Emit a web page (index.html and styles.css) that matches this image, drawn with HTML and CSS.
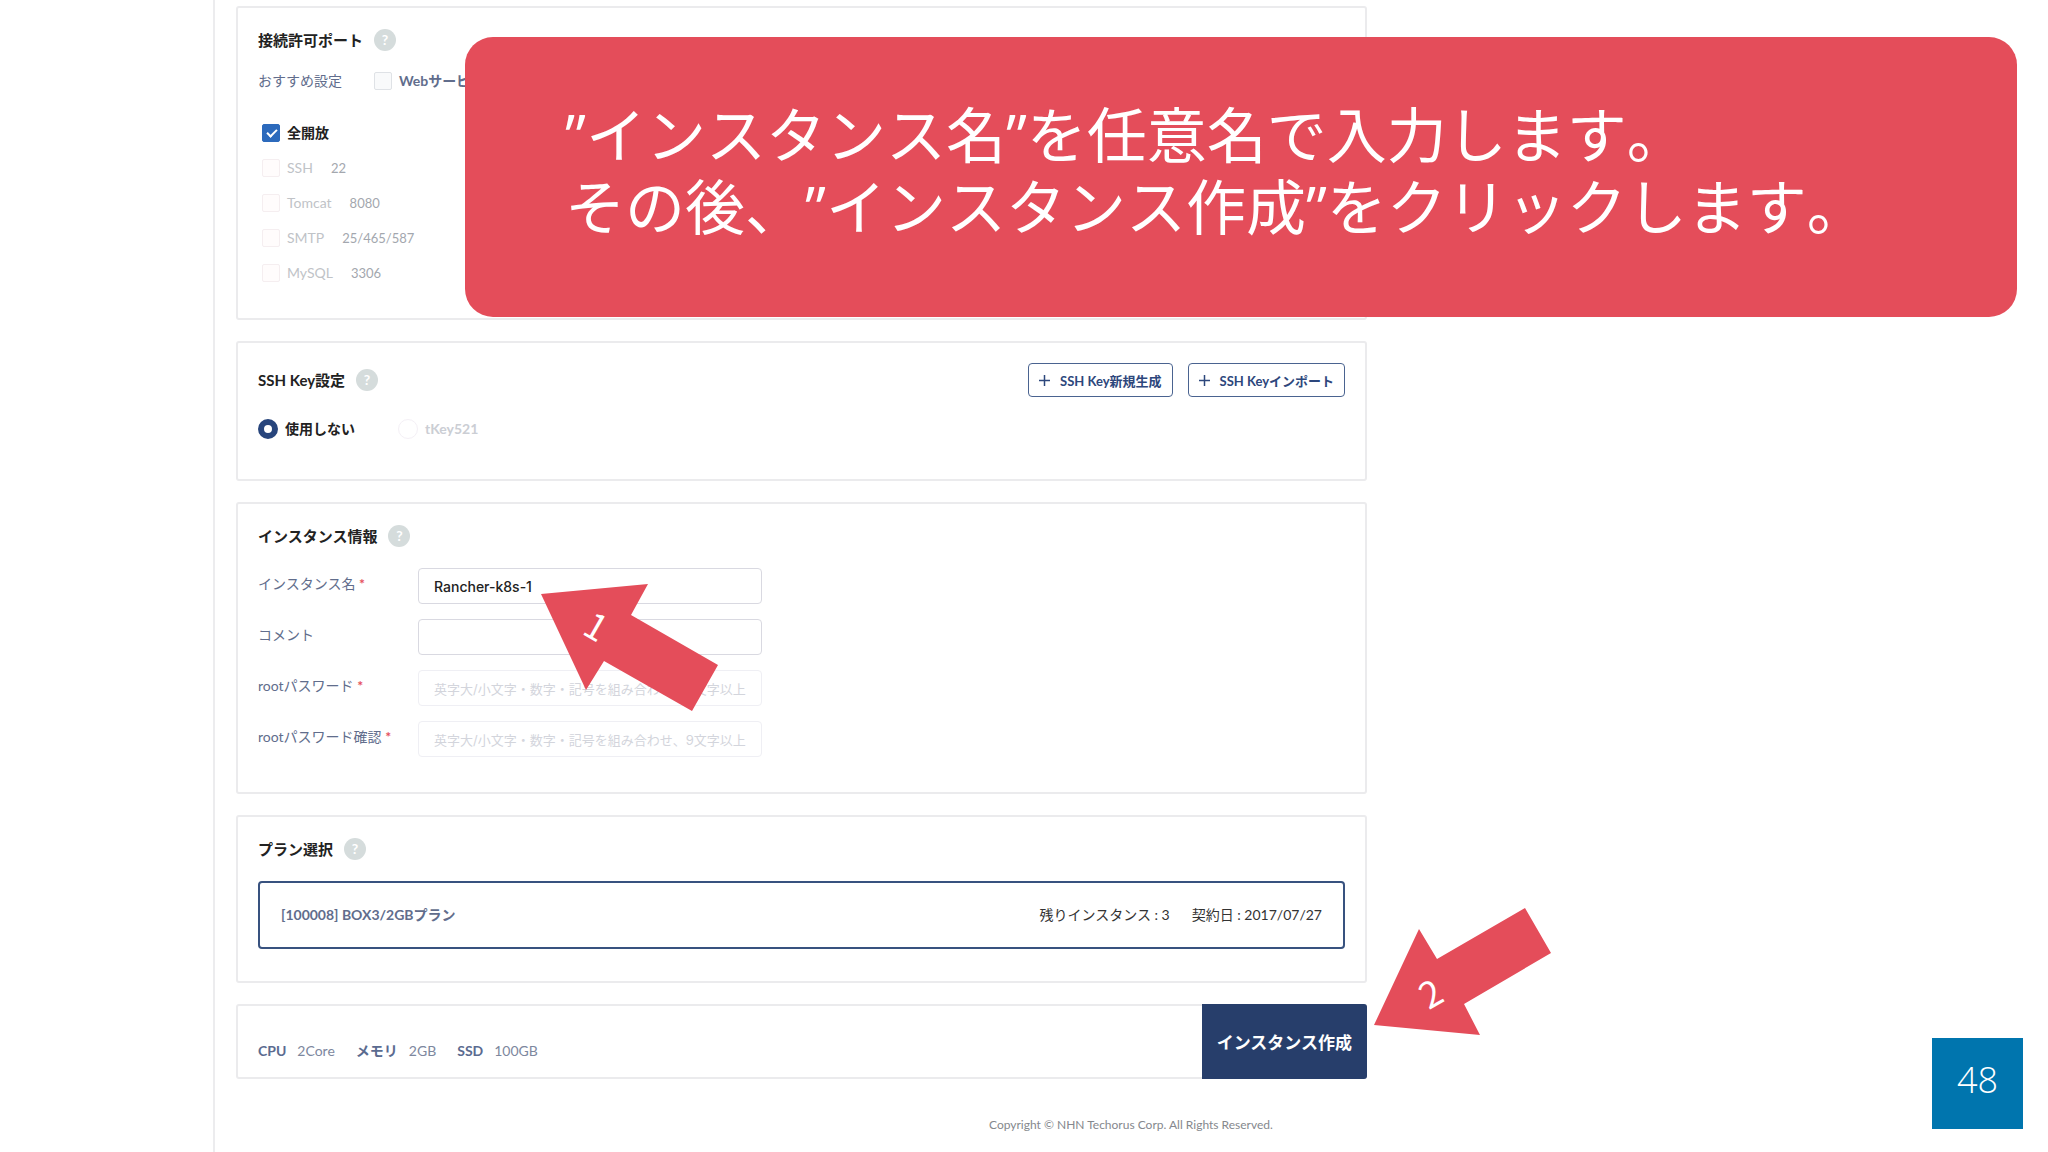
FILE: index.html
```html
<!DOCTYPE html>
<html lang="ja">
<head>
<meta charset="UTF-8">
<meta name="viewport" content="width=device-width, initial-scale=1.0">
<title>インスタンス作成</title>
<link rel="stylesheet" href="styles.css">
</head>
<body>

<div class="slide">
    <main class="console">
        <section class="panel">
            <div class="panel-head">
                <h2>接続許可ポート</h2>
                <span class="help">?</span>
            </div>
            <div class="recommend">
                <span>おすすめ設定</span>
                <label class="check web"><input type="checkbox"> Webサービス</label>
            </div>
            <ul class="ports">
                <li><label class="check on"><input type="checkbox" checked> 全開放</label></li>
                <li><label class="check off"><input type="checkbox" disabled> SSH</label><span>22</span></li>
                <li><label class="check off"><input type="checkbox" disabled> Tomcat</label><span>8080</span></li>
                <li><label class="check off"><input type="checkbox" disabled> SMTP</label><span>25/465/587</span></li>
                <li><label class="check off"><input type="checkbox" disabled> MySQL</label><span>3306</span></li>
            </ul>
        </section>

        <section class="panel">
            <div class="panel-head">
                <h2>SSH Key設定</h2>
                <span class="help">?</span>
                <div class="key-buttons">
                    <button type="button" class="btn-line"><svg width="11" height="11" viewBox="0 0 11 11"><path d="M5.5 0v11M0 5.5h11"/></svg>SSH Key新規生成</button>
                    <button type="button" class="btn-line"><svg width="11" height="11" viewBox="0 0 11 11"><path d="M5.5 0v11M0 5.5h11"/></svg>SSH Keyインポート</button>
                </div>
            </div>
            <div class="keys">
                <label class="radio"><input type="radio" name="key" checked> 使用しない</label>
                <label class="radio off"><input type="radio" name="key" disabled> tKey521</label>
            </div>
        </section>

        <section class="panel">
            <div class="panel-head">
                <h2>インスタンス情報</h2>
                <span class="help">?</span>
            </div>
            <div class="fields">
                <label for="name">インスタンス名 <em>*</em></label>
                <input type="text" id="name" value="Rancher-k8s-1">
                <label for="comment">コメント</label>
                <input type="text" id="comment">
                <label for="pass">rootパスワード <em>*</em></label>
                <input type="password" id="pass" placeholder="英字大/小文字・数字・記号を組み合わせ、9文字以上" disabled>
                <label for="pass2">rootパスワード確認 <em>*</em></label>
                <input type="password" id="pass2" placeholder="英字大/小文字・数字・記号を組み合わせ、9文字以上" disabled>
            </div>
        </section>

        <section class="panel">
            <div class="panel-head">
                <h2>プラン選択</h2>
                <span class="help">?</span>
            </div>
            <div class="plan">
                <strong>[100008] BOX3/2GBプラン</strong>
                <span>残りインスタンス : 3</span>
                <span>契約日 : 2017/07/27</span>
            </div>
        </section>

        <section class="panel summary">
            <dl>
                <dt>CPU</dt><dd>2Core</dd>
                <dt>メモリ</dt><dd>2GB</dd>
                <dt>SSD</dt><dd>100GB</dd>
            </dl>
            <button type="button" class="btn-create">インスタンス作成</button>
        </section>

        <footer>Copyright © NHN Techorus Corp. All Rights Reserved.</footer>
    </main>

    <!-- notes over the console -->
    <div class="callout">
        <p>”インスタンス名”を任意名で入力します。</p>
        <p>その後、”インスタンス作成”をクリックします。</p>
    </div>

    <svg class="arrow arrow-1" width="178" height="127" viewBox="0 0 178 127">
        <polygon points="0,10 107,0 90,31 177,81 151,127 63,77 45,106"/>
        <text x="55" y="56" transform="rotate(30 55 43)">1</text>
    </svg>
    <svg class="arrow arrow-2" width="178" height="127" viewBox="0 0 178 127">
        <polygon points="0,117 45,21 63,51 151,0 177,45 90,96 106,127"/>
        <text x="57" y="99" transform="rotate(-30 57 86)">2</text>
    </svg>

    <div class="page-no">48</div>
</div>

</body>
</html>
```
FILE: styles.css
```css
* { box-sizing: border-box; }
body { margin: 0; background: #fff; color: #222; font-family: Lato, "Noto Sans CJK JP", sans-serif; font-size: 14px; line-height: 24px; }
.slide { position: relative; min-height: 100vh; padding-left: 213px; overflow: hidden; }

.console { min-height: 100vh; border-left: 2px solid #ececee; padding: 6px 21px 0; display: flex; flex-direction: column; gap: 21px; }
.panel { width: 100%; max-width: 1131px; border: 2px solid #ebebed; border-radius: 3px; padding: 20px 20px 32px; }
.panel-head { display: flex; align-items: center; margin-bottom: 20px; }
h2 { margin: 0; font-size: 15px; font-weight: 700; }
.help { width: 22px; height: 22px; margin-left: 11px; border-radius: 50%; background: #d5dcdc; color: #fff; font-size: 14px; font-weight: 700; line-height: 22px; text-align: center; }

.check, .radio { display: flex; align-items: center; gap: 7px; }
.check input { appearance: none; width: 18px; height: 18px; margin: 0; border: 1px solid #dfe2e6; border-radius: 2px; background: #f9fafb; }
.check input:checked { border-color: #2c6abc; background: #2c6abc; }
.check input:checked::after { content: ""; display: block; width: 8px; height: 4px; margin: 4px 0 0 4px; border-left: 2px solid #fff; border-bottom: 2px solid #fff; transform: rotate(-45deg); }
.check.off { color: #c0c3c7; }
.check.off input { border-color: #f5eef0; background: #fffcfc; }
.check.on { font-weight: 700; }
.check.web { font-weight: 700; }

.recommend { display: flex; gap: 32px; line-height: 18px; color: #616d8c; }
.ports { list-style: none; margin: 31px 0 0; padding: 0 4px 1px; display: flex; flex-direction: column; gap: 11px; }
.ports li { display: flex; gap: 18px; }
.ports span { color: #a3a7ae; font-size: 13px; }

.key-buttons { margin-left: auto; display: flex; gap: 15px; }
.btn-line { display: flex; align-items: center; gap: 10px; height: 34px; padding: 0 10px; border: 1px solid #4a6390; border-radius: 4px; background: #fff; color: #2d477c; font-family: inherit; font-size: 13px; font-weight: 700; }
.btn-line svg { stroke: #2d477c; stroke-width: 1.5; }
.keys { display: flex; gap: 43px; margin-bottom: 6px; font-weight: 700; }
.radio input { appearance: none; width: 20px; height: 20px; margin: 0; border: 6px solid #27457c; border-radius: 50%; background: #fff; }
.radio.off { color: #cbced4; }
.radio.off input { border: 1px solid #f4f0f6; }

.fields { display: grid; grid-template-columns: 160px minmax(0, 344px); row-gap: 15px; padding-bottom: 3px; color: #616d8c; }
.fields label { line-height: 32px; }
.fields em { color: #e5505c; font-style: normal; font-weight: 700; }
.fields input { width: 100%; height: 36px; padding: 0 15px; border: 1px solid #d9d9e1; border-radius: 4px; background: #fff; color: #222; font-family: Inter, "Noto Sans CJK JP", sans-serif; font-size: 14px; font-weight: 500; }
.fields input:disabled { border-color: #efeff4; }
.fields input::placeholder { color: #d3d5dc; font-size: 13px; font-weight: 400; }

.plan { display: flex; align-items: center; gap: 22px; height: 68px; padding: 0 21px; border: 2px solid #38527f; border-radius: 4px; color: #333; }
.plan strong { flex: 1; color: #616d8c; }

.summary { display: flex; justify-content: space-between; height: 75px; padding: 0 0 0 20px; }
.summary dl { display: flex; margin: 33px 0 0; color: #7d879e; }
.summary dt { margin-right: 11px; color: #5b6b90; font-weight: 700; }
.summary dd { margin: 0 21px 0 0; }
.btn-create { margin: -2px; padding: 0 15px; border: 0; border-radius: 0 3px 3px 0; background: #273e6b; color: #fff; font-family: inherit; font-size: 17px; font-weight: 700; }
footer { padding: 13px 0 0 753px; color: #85888d; font-size: 12px; }

.callout { position: absolute; top: 37px; left: 465px; right: 31px; height: 280px; padding: 62px 100px; border-radius: 28px; background: #e44d5a; color: #fff; }
.callout p { margin: 0; font-family: "Open Sans", "Noto Sans CJK JP", sans-serif; font-size: 60px; font-weight: 400; font-kerning: none; text-spacing-trim: space-all; line-height: 72px; white-space: nowrap; }

.arrow { position: absolute; fill: #e44d5a; }
.arrow text { fill: #fff; font-family: "Noto Sans CJK JP", sans-serif; font-size: 36px; font-weight: 400; text-anchor: middle; }
.arrow-1 { left: 541px; top: 584px; }
.arrow-2 { left: 1374px; top: 908px; }

.page-no { position: absolute; right: 25px; bottom: 23px; width: 91px; height: 91px; background: #0075ae; color: #fff; font-family: "Open Sans", sans-serif; font-size: 36px; font-weight: 350; line-height: 84px; text-align: center; }
```
